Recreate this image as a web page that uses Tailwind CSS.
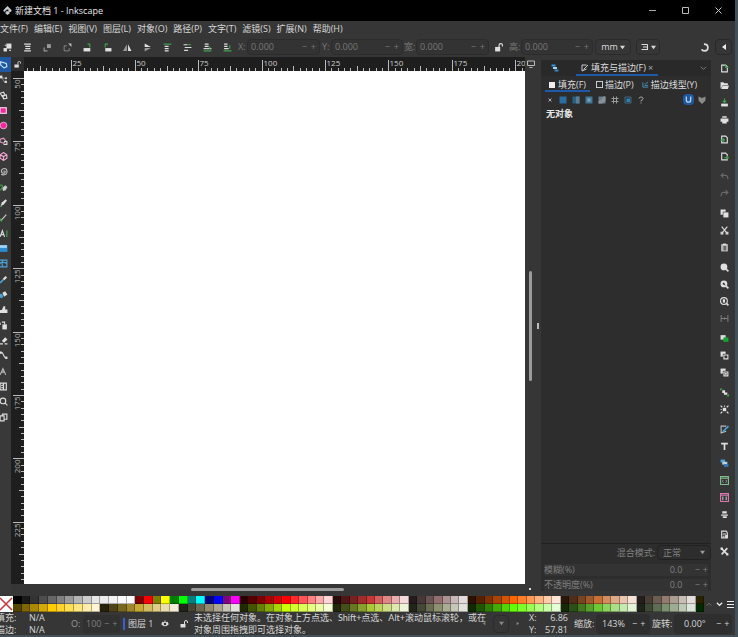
<!DOCTYPE html>
<html lang="zh-CN">
<head>
  <meta charset="UTF-8">
  <meta name="viewport" content="width=device-width, initial-scale=1.0">
  <title>新建文档 1 - Inkscape</title>
  <script src="https://cdn.jsdelivr.net/npm/@tailwindcss/browser@4"></script>
</head>
<body class="min-h-screen bg-[#435057] pr-[3px] pb-[2px] flex flex-col overflow-hidden font-['Open_Sans','Noto_Sans_CJK_SC',sans-serif] text-[9px] leading-3 text-[#d6d6d6]">
  <div class="flex-1 flex flex-col bg-[#363636]">
    <!-- Title bar -->
    <header class="h-[21px] bg-black flex items-center pl-[3px] pr-3 text-[#e8e8e8]">
      <svg class="size-[9px] mr-[3px]" viewBox="0 0 16 16"><path fill="#c8ccd0" d="M8 0l7 7q1 2-1 3l-3 1 1 2-4 3-4-3 1-2-3-1q-2-1-1-3z"/><path fill="#111" d="M8 6l3 1-2 1 1 2-3-1-3 1 1-3z M3 9l4 2-4-1z"/></svg>
      <h1 class="flex-1 text-[9px]">新建文档 1 - Inkscape</h1>
      <div class="flex items-center gap-6">
        <button aria-label="最小化" class="size-[9px]"><svg viewBox="0 0 9 9"><path d="M1 4.5h7" stroke="#aaa"/></svg></button>
        <button aria-label="最大化" class="size-[9px]"><svg viewBox="0 0 9 9"><path d="M1.5 1.5h6v6h-6z" fill="none" stroke="#bbb"/></svg></button>
        <button aria-label="关闭" class="size-[9px]"><svg viewBox="0 0 9 9"><path d="M1.500 1.500l6 6m0-6l-6 6" stroke="#ccc"/></svg></button>
      </div>
    </header>

    <!-- Menu -->
    <nav class="h-4 flex items-center gap-[6px] whitespace-nowrap">
      <button>文件(F)</button>
      <button>编辑(E)</button>
      <button>视图(V)</button>
      <button>图层(L)</button>
      <button>对象(O)</button>
      <button>路径(P)</button>
      <button>文字(T)</button>
      <button>滤镜(S)</button>
      <button>扩展(N)</button>
      <button>帮助(H)</button>
    </nav>

    <!-- Tool controls -->
    <div class="h-5 flex items-center pl-[3px] pr-[3px] text-[#787878]">
      <div id="controls" class="flex items-center gap-[11px] w-[235px]"></div>
      <label for="x" class="w-[9px]">X:</label>
      <div class="flex items-center w-[73px] h-4 border border-[#2c2c2c] rounded-sm px-[3px] mr-[2px] bg-[#333]">
        <input id="x" value="0.000" class="w-0 flex-1 leading-3"><button aria-label="减">−</button><button aria-label="加" class="ml-1">+</button>
      </div>
      <label for="y" class="w-[9px]">Y:</label>
      <div class="flex items-center w-[72px] h-4 border border-[#2c2c2c] rounded-sm px-[3px] mr-px bg-[#333]">
        <input id="y" value="0.000" class="w-0 flex-1 leading-3"><button aria-label="减">−</button><button aria-label="加" class="ml-1">+</button>
      </div>
      <label for="w" class="w-[12px]">宽:</label>
      <div class="flex items-center w-[73px] h-4 border border-[#2c2c2c] rounded-sm px-[3px] mr-[5px] bg-[#333]">
        <input id="w" value="0.000" class="w-0 flex-1 leading-3"><button aria-label="减">−</button><button aria-label="加" class="ml-1">+</button>
      </div>
      <button aria-label="锁定比例" class="text-[#e0e0e0] mr-[6px]"><svg class="size-[9px]" viewBox="0 0 16 16"><path fill="currentColor" d="M2 7h9v8H2z"/><path d="M9 7V4q0-3 3-3t3 3v2" fill="none" stroke="currentColor" stroke-width="2"/></svg></button>
      <label for="h" class="w-[12px]">高:</label>
      <div class="flex items-center w-[72px] h-4 border border-[#2c2c2c] rounded-sm px-[3px] bg-[#333]">
        <input id="h" value="0.000" class="w-0 flex-1 leading-3"><button aria-label="减">−</button><button aria-label="加" class="ml-1">+</button>
      </div>
      <button class="flex items-center justify-center gap-[2px] w-9 h-4 ml-[2px] border border-[#2b2b2b] rounded-sm text-[#ddd]">mm <svg class="size-[5px]" viewBox="0 0 6 6"><path fill="currentColor" d="M0 1h6L3 5z"/></svg></button>
      <button aria-label="变换选项" class="flex items-center justify-center gap-[2px] w-6 h-4 ml-[5px] border border-[#2b2b2b] rounded-sm text-[#ddd]"><svg class="size-[8px]" viewBox="0 0 16 16"><path d="M1 3h12v5H4M1 13h11M13 8v6" fill="none" stroke="currentColor" stroke-width="2"/></svg><svg class="size-[5px]" viewBox="0 0 6 6"><path fill="currentColor" d="M0 1h6L3 5z"/></svg></button>
      <div class="flex-1"></div>
      <button aria-label="贴齐" class="text-[#ddd] mr-[6px]"><svg class="size-[9px]" viewBox="0 0 16 16"><path d="M7 2q7 0 7 6t-6 6q-4 0-5-3" fill="none" stroke="currentColor" stroke-width="3"/></svg></button>
      <button aria-label="贴齐选项" class="flex items-center justify-center w-[17px] h-4 border border-[#282828] rounded-sm text-[#eee]"><svg class="size-[6px]" viewBox="0 0 6 6"><path fill="currentColor" d="M5 0v6L1 3z"/></svg></button>
    </div>

    <main class="flex-1 flex">
      <!-- Toolbox -->
      <div class="w-[11px] overflow-hidden bg-[#393939]">
        <div id="tools" class="flex flex-col h-[368px] w-[6px]"></div>
      </div>

      <!-- Canvas with rulers -->
      <section class="flex-1 min-w-0 flex flex-col">
        <div class="h-[14px] flex">
          <button aria-label="锁定参考线" class="w-[13px] bg-[#2e2e2e] flex items-center justify-center text-[#ddd]"><svg class="size-[7px]" viewBox="0 0 16 16"><path fill="currentColor" d="M1 8h10v7H1z"/><path d="M9 8V4q0-3 3-3t3 3v2" fill="none" stroke="currentColor" stroke-width="2"/></svg></button>
          <div class="flex-1 min-w-0 bg-[#1e1e1e] overflow-hidden"><svg id="ruler-x" class="w-full h-[14px]"></svg></div>
          <button aria-label="显示模式" class="w-4 pl-[2px] flex items-center text-[#bbb]"><svg class="size-[8px]" viewBox="0 0 16 16"><path d="M1 2h14v9H1zM5 15h6" fill="none" stroke="currentColor" stroke-width="2"/></svg></button>
        </div>
        <div class="flex-1 flex">
          <div class="w-[13px] bg-[#1e1e1e] relative overflow-hidden"><svg id="ruler-y" class="absolute inset-0 w-full h-full"></svg></div>
          <div class="flex-1 bg-white"></div>
          <div class="w-4 flex pl-1 pt-[200px]">
            <div class="w-[3px] h-[110px] rounded bg-[#9b9b9b]"></div>
            <div class="w-[2px] h-[6px] border border-[#bbb] ml-[5px] mt-[52px]"></div>
          </div>
        </div>
        <div class="h-2.5 flex items-center pl-[13px]">
          <div class="flex-1 flex justify-center"><div class="w-[153px] h-[3px] rounded bg-[#9b9b9b] mr-[14px]"></div></div>
          <div class="w-4 pl-1"><div class="size-[2px] bg-[#ddd]"></div></div>
        </div>
      </section>

      <!-- Fill and stroke dialog -->
      <aside class="w-[170px] my-[3px] bg-[#2d2d2d] flex flex-col">
        <div class="h-4 flex items-center bg-[#292929]">
          <button aria-label="图层和对象" class="w-[35px] flex justify-center pr-2"><svg class="size-[8px]" viewBox="0 0 16 16"><path fill="#3d9be0" d="M1 1h8v4H1z"/><path fill="#a8d4ee" d="M4 6h8v4H4z"/><path fill="#3d86c0" d="M7 11h8v4H7z"/></svg></button>
          <div class="flex items-center justify-center gap-[2px] h-4 w-[82px] pt-[2px] border-b-2 border-[#1e5aa8] text-[#ddd]">
            <svg class="size-[8px]" viewBox="0 0 16 16"><path d="M11 2H2v12l9-4M5 11L14 2" fill="none" stroke="#ccc" stroke-width="2"/></svg>
            <button>填充与描边(F)</button>
            <button aria-label="关闭标签" class="text-[#aaa]">×</button>
          </div>
          <div class="flex-1"></div>
          <button aria-label="对话框菜单" class="mr-1"><svg class="size-[7px]" viewBox="0 0 8 8"><path d="M1 2l3 3 3-3" fill="none" stroke="#888"/></svg></button>
        </div>
        <div class="h-4 flex items-center gap-[6px] pl-1 whitespace-nowrap text-[#ddd]">
          <button class="flex items-center gap-[3px] h-4 pt-[3px] px-1 border-b-2 border-[#1e5aa8]"><i class="size-[6px] bg-[#eee]"></i>填充(F)</button>
          <button class="flex items-center gap-[2px] h-4 pt-px"><i class="size-[7px] border border-[#ccc]"></i>描边(P)</button>
          <button class="flex items-center gap-[2px] h-4 pt-px ml-[2px]"><svg class="size-[7px]" viewBox="0 0 16 16"><path d="M2 3v11h12M6 10h8M6 6l2 1 6-5" fill="none" stroke="#4c9ac4" stroke-width="2"/></svg>描边线型(Y)</button>
        </div>
        <div class="h-[15px] flex items-center pl-[5px] pr-[5px]">
          <div id="paints" class="flex items-center gap-[5px] flex-1"></div>
          <button aria-label="缠绕规则" class="size-[11px] rounded-sm bg-[#1f57a0] flex items-center justify-center"><svg class="size-[7px]" viewBox="0 0 16 16"><path d="M3 1v8q0 5 5 5t5-5V1" fill="none" stroke="#b8d0ec" stroke-width="3"/></svg></button>
          <button aria-label="填充规则" class="ml-1"><svg class="size-[8px]" viewBox="0 0 16 16"><path fill="#8a8a8a" d="M1 1l7 3 7-3v8l-7 7-7-7z"/></svg></button>
        </div>
        <h2 class="pl-[5px] mt-px text-[9px] leading-3 font-bold text-[#e6e6e6]">无对象</h2>
        <div class="flex-1"></div>
        <div class="h-[18px] flex items-center justify-end border-t border-[#222] text-[#808080]">
          <label for="blend" class="mr-[2px]">混合模式:</label>
          <div class="relative">
            <select id="blend" class="appearance-none w-[54px] h-[15px] pl-[5px] leading-3 border border-[#222] rounded-sm bg-[#2d2d2d]"><option>正常</option></select>
            <svg class="absolute right-[6px] top-[5px] size-[5px]" viewBox="0 0 6 6"><path fill="#999" d="M0 1h6L3 5z"/></svg>
          </div>
        </div>
        <div class="mx-[3px] mt-[3px] h-[12px] flex items-center bg-[#333] text-[#808080]">
          <label for="blur" class="flex-1">模糊(%)</label>
          <input id="blur" value="0.0" class="w-5 mr-[5px] leading-3"><button aria-label="减">−</button><button aria-label="加" class="ml-[3px]">+</button>
        </div>
        <div class="mx-[3px] mt-[3px] h-[12px] flex items-center bg-[#333] text-[#808080]">
          <label for="opacity" class="flex-1">不透明度(%)</label>
          <input id="opacity" value="0.0" class="w-5 mr-[5px] leading-3"><button aria-label="减">−</button><button aria-label="加" class="ml-[3px]">+</button>
        </div>
      </aside>

      <!-- Commands bar -->
      <div id="commands" class="w-6 pt-[3px] pl-[2px] flex flex-col items-center gap-[3px]"></div>
    </main>

    <!-- Palette -->
    <div class="h-[18px] flex items-start pt-[2px]">
      <button aria-label="无颜色" class="w-[13px] h-4 bg-white"><svg class="w-[13px] h-4" viewBox="0 0 13 16"><path d="M0 2l12 12M12 2L0 14" stroke="#c8323c" stroke-width="1.500"/></svg></button>
      <div id="palette" class="flex-1 flex"></div>
      <div class="w-[31px] h-4 flex items-center justify-between pl-[2px] pr-px">
        <button aria-label="上一行"><svg class="size-[6px]" viewBox="0 0 8 8"><path d="M1 6l3-3 3 3" fill="none" stroke="#888"/></svg></button>
        <button aria-label="下一行"><svg class="size-[7px]" viewBox="0 0 8 8"><path d="M1 2l3 3 3-3" fill="none" stroke="#eee" stroke-width="1.500"/></svg></button>
        <button aria-label="调色板菜单"><svg class="size-[8px]" viewBox="0 0 8 8"><path d="M1 1.500h7M1 4.500h7M1 7.500h7" stroke="#eee"/></svg></button>
      </div>
    </div>

    <!-- Status bar -->
    <footer class="h-[23px] flex items-center whitespace-nowrap overflow-hidden">
      <div class="w-[29px] -ml-1 mr-1"><p>填充:</p><p>描边:</p></div>
      <div class="w-[42px]"><p>N/A</p><p>N/A</p></div>
      <label for="alpha" class="w-[12px] text-[#999]">O:</label>
      <div class="w-[37px] h-[18px] pl-[3px] flex items-center rounded-sm bg-[#313131] text-[#808080]">
        <input id="alpha" value="100" class="w-[18px] leading-3"><button aria-label="减">−</button><button aria-label="加" class="ml-[3px]">+</button>
      </div>
      <button class="flex items-center ml-[3px] w-[38px]"><i class="w-[2px] h-3 bg-[#3a5fd0] mr-[3px]"></i>图层 1</button>
      <button aria-label="切换可见" class="w-[10px]"><svg class="size-[8px]" viewBox="0 0 16 16"><path fill="#ddd" d="M0 8q8-9 16 0-8 9-16 0zM7 1h2v3H7zM2 3l2 2-2 1zM14 3l-2 2 2 1z"/><circle cx="8" cy="8" r="2.500" fill="#333"/></svg></button>
      <button aria-label="锁定图层" class="w-[23px] flex justify-center pl-[2px]"><svg class="size-[8px]" viewBox="0 0 16 16"><path fill="#ddd" d="M1 8h10v7H1z"/><path d="M9 8V4q0-3 3-3t3 3v2" fill="none" stroke="#ddd" stroke-width="2"/></svg></button>
      <p class="flex-1 min-w-0 font-['Lato','Noto_Sans_CJK_SC',sans-serif]">未选择任何对象。在对象上方点选、Shift+点选、Alt+滚动鼠标滚轮，或在<br>对象周围拖拽即可选择对象。</p>
      <div class="flex items-center w-[47px] text-[#888]">
        <button aria-label="上一页" class="w-[11px]"><svg class="size-[5px]" viewBox="0 0 6 6"><path fill="currentColor" d="M4 1v4L1 3z"/></svg></button>
        <button aria-label="页面" class="w-4 h-[18px] border border-[#2c2c2c] rounded-sm flex items-center justify-center"><svg class="size-[5px]" viewBox="0 0 6 6"><path fill="currentColor" d="M0 1h6L3 5z"/></svg></button>
        <button aria-label="下一页" class="ml-[6px]"><svg class="size-[5px]" viewBox="0 0 6 6"><path fill="currentColor" d="M2 1v4l3-2z"/></svg></button>
      </div>
      <div class="w-[10px]"><p>X:</p><p>Y:</p></div>
      <div class="w-[29px] text-right mr-[6px]"><p>6.86</p><p>57.81</p></div>
      <label for="zoom" class="w-[22px]">缩放:</label>
      <div class="w-[54px] h-[20px] pl-[6px] flex items-center rounded-sm bg-[#2e2e2e]">
        <input id="zoom" value="143%" class="w-[30px] leading-3"><button aria-label="缩小">−</button><button aria-label="放大" class="ml-[3px]">+</button>
      </div>
      <label for="rotate" class="w-[22px] ml-[2px]">旋转:</label>
      <div class="w-[58px] h-[20px] pl-[10px] mr-[3px] flex items-center rounded-sm bg-[#2e2e2e]">
        <input id="rotate" value="0.00°" class="w-[32px] leading-3"><button aria-label="左转">−</button><button aria-label="右转" class="ml-[3px]">+</button>
      </div>
    </footer>
  </div>

  <script>
    // Icon bodies, drawn on a 16x16 grid
    const line = (d, color = '#ddd', width = 2) => `<path d="${d}" fill="none" stroke="${color}" stroke-width="${width}"/>`;
    const fill = (d, color = '#e0e0e0') => `<path d="${d}" fill="${color}"/>`;
    const svg = (body, size) => `<svg class="${size}" viewBox="0 0 16 16">${body}</svg>`;
    const green = '#3fa34d';
    const blue = '#4ba3d8';
    const pink = '#f02a9c';

    const controls = [
      ['全选', fill('M6 1h9v9H6z') + fill('M1 9h6v6H1z') + line('M3 4h3M11 13h3')],
      ['在所有图层全选', line('M2 2h12M4 6h9M4 10h9M2 14h12')],
      ['取消选择', fill('M7 2h7v7H7z', '#999') + line('M2 8v6h6', '#999')],
      ['切换选择框', line('M2 5v9h9v-5M2 5h5', '#bbb', 1) + fill('M9 1h6v6z', '#bbb')],
      ['逆时针旋转', fill('M1 9h12v6H1z') + line('M12 8V2H8', green)],
      ['顺时针旋转', fill('M4 9h11v6H4z') + line('M4 8V2h5', green)],
      ['水平翻转', fill('M7 2v12H0z', '#999') + fill('M9 2l6 12H9z')],
      ['垂直翻转', fill('M3 1l11 6H3z') + fill('M3 9h11L3 15z', '#999')],
      ['置顶', line('M1 2h14', green) + line('M3 6h7M3 10h7M3 14h7')],
      ['上移一层', line('M1 3h7M3 8h12M2 13h7') + line('M9 3h5', green)],
      ['下移一层', line('M3 2h7M3 6h7') + line('M1 10h14', '#ddd') + line('M1 14h14M12 6v5', green)],
      ['置底', line('M2 2h6M2 6h6M2 10h8') + line('M1 14h14M12 4v6', green)],
    ];

    const tools = [
      ['选择', line('M3 3l10 3 1 6-5 2-6-5z', '#cfe6ff')],
      ['节点', line('M4 4l9 3M5 5l5 8', '#bbb', 1) + fill('M1 1h5v5H1z') + fill('M10 10h4v4h-4zM11 4h3v3h-3z')],
      ['形状生成', line('M2 4l6-2 3 5-5 3zM7 8l6-1 1 6-6 1z')],
      ['矩形', fill('M1 2h13v12H1z', '#ffd0ea') + fill('M3 4h9v8H3z', pink)],
      ['椭圆', '<circle cx="8" cy="8" r="6" fill="#f02a9c" stroke="#eeb4d5" stroke-width="1.500"/>'],
      ['星形', line('M2 4l6-2 4 5-4 4-6-2z', '#e8a0c8') + line('M9 8h5v5H8', '#ddd')],
      ['立方体', line('M8 1l6 4v6l-6 4-6-4V5zM2 5l6 3 6-3M8 8v7', '#f4a8d4')],
      ['螺旋', line('M8 8q1-2 3 0 0 4-4 3-4-2-2-6 4-4 8-1 3 6-1 9-5 2-8 0', '#bbb')],
      ['铅笔', line('M1 5q4-3 5 0t-4 8', green) + fill('M6 9l5-5 4 3-3 6-5 1z', '#ccc')],
      ['钢笔', fill('M3 14L5 8l7-6 2 3-6 7z') + line('M1 9v6h4', green)],
      ['书法', line('M3 14L13 3', '#ccc') + line('M1 9l4 6', green)],
      ['文字', line('M2 14L6 3l4 11M3 10h6') + line('M14 2v12', green)],
      ['渐变', fill('M1 2h14v12H1z', '#2d8cd0') + fill('M1 2h13v5H1z', '#9fd2f5')],
      ['网格', line('M1 2h13v12H1zM1 8q6-4 13 0M7 2q-3 6 0 12', blue)],
      ['取色器', line('M2 14l6-6', blue, 3) + line('M8 8l5-5', '#ddd', 4)],
      ['油漆桶', fill('M6 5l5-3 4 6-6 4z') + fill('M1 7q6-2 6 4t-6 2z', blue)],
      ['微调', fill('M1 9h4l3-7h3v6h4v6H1z')],
      ['喷绘', fill('M6 6h8v9H6z') + line('M5 2h5v4M2 3v4')],
      ['橡皮', fill('M5 9l6-7 4 4-6 6z') + line('M1 14h6M10 14h5')],
      ['连接器', line('M2 3h4l4 8h4') + fill('M1 1h4v4H1zM11 10h4v4h-4z')],
      ['测量', line('M2 14L7 3l5 11M4 9h6', '#bbb')],
      ['页面', line('M2 2h11v12H2zM8 2v12M4 6h3M4 10h3')],
      ['缩放', '<circle cx="7" cy="7" r="5" fill="none" stroke="#ddd" stroke-width="2"/>' + line('M11 11l4 4')],
      ['多页', line('M2 5h7v9H2zM6 5V2h8v9H9')],
    ];

    const doc = 'M3 2h7l3 3v9H3z';
    const commands = [
      [
        ['新建', line(doc) + line('M10 1v5h5', green)],
        ['打开', fill('M1 2h5l2 2h6v3H5l-3 6H1z') + fill('M5 8h11l-2 6H2z')],
        ['保存', line('M8 1v7M5 5l3 3 3-3', green) + fill('M2 10h12v5H2z')],
        ['打印', fill('M4 2h8v3H4zM1 6h14v6h-3v3H4v-3H1z')],
      ],
      [
        ['导入', line(doc) + line('M1 9h7M5 6l3 3-3 3', green)],
        ['导出', line(doc) + line('M8 10h7M12 7l3 3-3 3', green)],
      ],
      [
        ['撤消', line('M6 2L2 6l4 4M2 6h8q4 0 4 7', '#6a6a6a')],
        ['重做', line('M10 2l4 4-4 4M14 6H6q-4 0-4 7', '#6a6a6a')],
      ],
      [
        ['复制', fill('M1 1h9v4H5v5H1z') + fill('M6 6h9v9H6z')],
        ['剪切', line('M3 1l8 10M13 1L5 11') + line('M2 11h3v3H2zM11 11h3v3h-3z')],
        ['粘贴', fill('M2 2h12v13H2z', '#bbb') + fill('M6 5h5v8H6z', '#666') + fill('M5 1h6v3H5z')],
      ],
      [
        ['缩放到选区', '<circle cx="7" cy="7" r="6" fill="#e0e0e0"/>' + line('M11 11l4 4', '#ddd', 3)],
        ['缩放到绘图', '<circle cx="7" cy="7" r="6" fill="#e0e0e0"/>' + fill('M4 7l3-3 3 6z', '#333') + line('M11 11l4 4', '#ddd', 3)],
        ['缩放到页面', '<circle cx="7" cy="7" r="6" fill="none" stroke="#ddd" stroke-width="2"/>' + fill('M5 4h4v6H5z') + line('M11 11l4 4', '#ddd', 3)],
        ['页面居中', line('M2 2v12M14 2v12M3 8h4M9 8h4M8 6v4', '#bbb', 1)],
      ],
      [
        ['再制', fill('M1 2h9v8H1z') + fill('M6 6h9v8H6z', '#18a030')],
        ['克隆', fill('M1 1h9v9H1z') + fill('M5 5h10v10H5z', '#363636') + line('M7 7h7v7H7z')],
        ['断开克隆', fill('M1 1h9v9H1z') + fill('M5 5h10v10H5z', '#363636') + line('M7 7h7v7H7z') + fill('M9 9h3v3H9z')],
      ],
      [
        ['群组', fill('M4 4h5v5H4zM7 8h6v4H7z') + line('M1 4V2h3M12 14h3v-3', green)],
        ['解除群组', fill('M5 5h6v6H5z') + line('M1 1l3 3M15 1l-3 3M1 15l3-3M15 15l-3-3M8 1v2M1 8h2')],
      ],
      [
        ['填充与描边', line('M11 2H2v12l9-3', '#bbb') + line('M5 12L15 2', blue, 3)],
        ['文字与字体', line('M2 3h12M8 3v11', '#ddd', 3)],
        ['图层和对象', fill('M1 1h8v5H1z', blue) + fill('M4 5h9v5H4z', '#b7d3e8') + fill('M7 9h8v5H7z', '#3479b5')],
        ['XML 编辑器', line('M1 1h14v14H1zM1 4h14', '#7dba8c', 2) + line('M6 7L4 9l2 3M10 7l2 2-2 3', '#ccc', 1)],
        ['选择器和CSS', line('M1 1h14v14H1zM1 4h14', '#d87ab0', 2) + line('M5 6v7M11 6v7', '#bbb')],
        ['对齐与分布', fill('M4 2h8v4H4zM2 8h12v2H2zM5 11h7v3H5z')],
      ],
      [
        ['文档属性', line('M3 2h8l2 3v9H3zM5 7h6M5 11h3') + fill('M9 9h5v5H9z')],
        ['首选项', line('M2 2l11 11M13 2L3 13', '#ddd', 3) + fill('M1 1h4v4H1zM11 11h4v4h-4z')],
      ],
    ];

    const paints = [
      ['无', line('M5 5l6 6M11 5l-6 6', '#aaa')],
      ['单色', fill('M1 1h14v14H1z', '#2a6ea0')],
      ['线性渐变', fill('M1 1h14v14H1z', '#2a6080') + fill('M8 1h7v14H8z', '#5a7e92')],
      ['径向渐变', fill('M1 1h14v14H1z', '#3f7898') + fill('M5 5h6v6H5z', '#83a4b5')],
      ['网格渐变', fill('M1 1h14v14H1z', '#667f8c') + fill('M1 10q7-1 9-9h5v9L8 15H1z', '#8a9296')],
      ['图案', line('M1 5h14M1 11h14M5 1v14M11 1v14', '#999', 2)],
      ['色板', line('M2 2h12v12H2z', '#3d6c88') + fill('M5 5h7v7H5z', '#2f80b5')],
      ['未设置', line('M4 5q0-3 4-3t4 3-4 4v2M8 13v2', '#aaa')],
    ];

    const addButtons = (id, list, buttonClass, size) => {
      document.getElementById(id).innerHTML += list.map(([label, body]) =>
        `<button aria-label="${label}" class="${buttonClass}">${svg(body, size)}</button>`).join('');
    };

    addButtons('controls', controls, 'w-[9px]', 'size-[9px]');
    addButtons('tools', tools, 'flex-1 flex items-center justify-center first:bg-[#1f57a0] first:w-[11px] first:pr-[5px]', 'size-[9px] shrink-0');
    addButtons('paints', paints, 'w-2', 'size-2');
    commands.forEach(group => {
      document.getElementById('commands').innerHTML += '<div>' + group.map(([label, body]) =>
        `<button aria-label="${label}" class="flex items-center h-[17px]">${svg(body, 'size-[9px]')}</button>`).join('') + '</div>';
    });

    // Rulers: ten ticks for every 25 mm
    const step = 6.34;
    const rulerX = document.getElementById('ruler-x');
    const rulerY = document.getElementById('ruler-y');
    const tickLength = i => i % 10 === 0 ? 11 : i % 5 === 0 ? 5 : 3;

    const drawRulers = () => {
      const width = rulerX.getBoundingClientRect().width;
      const height = rulerY.getBoundingClientRect().height;
      let marks = '';
      for (let i = 3; -16 + i * step < width; i++) {
        const x = Math.round(-16 + i * step) + 0.5;
        marks += `<path d="M${x} 14v-${tickLength(i)}" stroke="#bbb"/>`;
        if (i % 10 === 0) marks += `<text x="${x + 1}" y="9" font-size="8" fill="#ccc">${i * 2.5}</text>`;
      }
      rulerX.innerHTML = marks;
      marks = '';
      for (let i = 0; 7 + i * step < height; i++) {
        const y = Math.round(7 + i * step) + 0.5;
        marks += `<path d="M13 ${y}h-${tickLength(i)}" stroke="#bbb"/>`;
        if (i % 10 === 0) marks += `<text transform="translate(9 ${y + 1}) rotate(-90)" text-anchor="end" font-size="8" fill="#bbb">${50 + i * 2.5}</text>`;
      }
      rulerY.innerHTML = marks;
    };
    const rulerObserver = new ResizeObserver(drawRulers);
    rulerObserver.observe(rulerX);
    rulerObserver.observe(rulerY);

    // Palette, two rows in two blocks of columns
    const blocks = [
      {
        width: 227,
        rows: [
          '000000 1a1a1a 333333 4d4d4d 666666 808080 999999 b3b3b3 cccccc e6e6e6 ececec f2f2f2 f9f9f9 ffffff 800000 ff0000 808000 ffff00 008000 00ff00 008080 00ffff 000080 0000ff 800080 ff00ff',
          '554400 806600 aa8800 d4aa00 ffcc00 ffd42a ffdd55 ffe680 ffeeaa fff6d5 28220b 504416 786721 a0892c c8ab37 d3bc5f decd87 e9ddaf f4eed7 24221c 484537 6c6753 918a6f aca793 c8c4b7 e3e2db',
        ],
      },
      {
        width: 464,
        rows: [
          '2b0000 550000 800000 aa0000 d40000 ff0000 ff2a2a ff5555 ff8080 ffaaaa ffd5d5 280b0b 501616 782121 a02c2c c83737 d35f5f de8787 e9afaf f4d7d7 241c1c 483737 6c5353 916f6f ac9393 c8b7b7 e3dbdb 2b1100 552200 803300 aa4400 d45500 ff6600 ff7f2a ff9955 ffb380 ffccaa ffe6d5 28170b 502d16 784421 a05a2c c87137 d38d5f deaa87 e9c6af f4e3d7 241f1c 483e37 6c5d53 917c6f ac9d93 c8beb7 e3dedb 2b2200',
          '222b00 445500 668000 88aa00 aad400 ccff00 d4ff2a ddff55 e5ff80 eeffaa f6ffd5 22280b 445016 677821 89a02c abc837 bcd35f cdde87 dde9af eef4d7 23241c 464837 6a6c53 8d916f aaac93 c6c8b7 e2e3db 112b00 225500 338000 44aa00 55d400 66ff00 7fff2a 99ff55 b3ff80 ccffaa e5ffd5 17280b 2d5016 447821 5aa02c 71c837 8dd35f aade87 c6e9af e3f4d7 1f241c 3e4837 5d6c53 7c916f 9dac93 bec8b7 dee3db 002b00',
        ],
      },
    ];
    document.getElementById('palette').innerHTML = blocks.map(block =>
      `<div class="basis-0" style="flex-grow:${block.width}">` + block.rows.map(row =>
        '<div class="flex">' + row.split(' ').map(color =>
          `<button aria-label="#${color}" class="flex-1 h-2 border-r border-b border-black/30" style="background:#${color}"></button>`).join('') + '</div>').join('') + '</div>').join('');
  </script>
</body>
</html>
